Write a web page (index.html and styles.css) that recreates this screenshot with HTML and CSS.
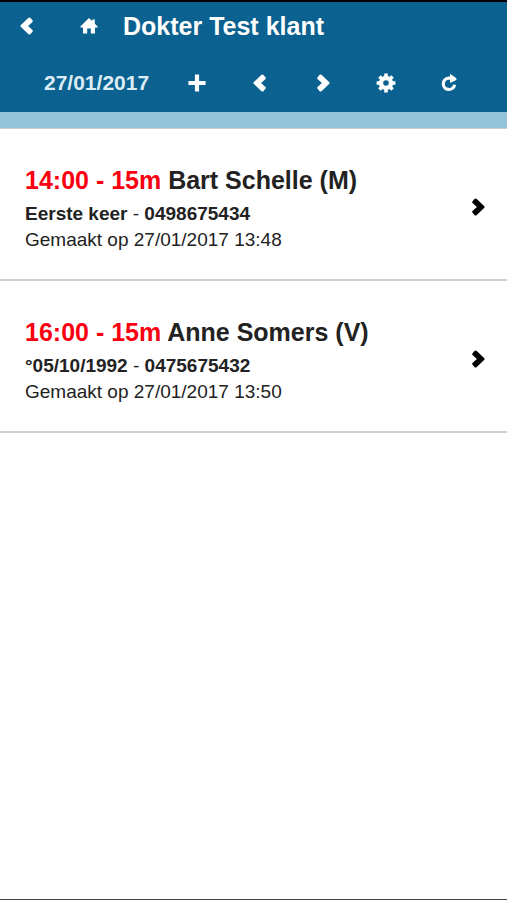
FILE: index.html
```html
<!DOCTYPE html>
<html lang="nl">
<head>
<meta charset="utf-8">
<meta name="viewport" content="width=device-width, initial-scale=1">
<title>Dokter Test klant</title>
<link rel="stylesheet" href="styles.css">
</head>
<body>
<svg class="symbols" aria-hidden="true">
  <symbol id="chevron" viewBox="0 0 20 20"><path d="M4.4 4.5 6.4 2.1Q7.6.9 8.8 2.1L16.3 9.3Q17 10 16.3 10.7L8.8 17.9Q7.6 19.1 6.4 17.9L4.4 15.5Q3.8 14.6 4.5 13.9L8.9 10 4.5 6.1Q3.8 5.4 4.4 4.5Z" fill="currentColor"/></symbol>
  <symbol id="home" viewBox="0 0 20 20"><path d="M10 2 18.6 10.6V11.6H16V17.4H11.8V12.4H8.2V17.4H4V11.6H1.4V10.6ZM13.2 3.4h2.6v5l-2.6-2Z" fill="currentColor"/></symbol>
  <symbol id="plus" viewBox="0 0 20 20"><path d="M10 1.4v17.2M1.4 10h17.2" stroke="currentColor" stroke-width="4.2"/></symbol>
  <symbol id="gear" viewBox="0 0 20 20"><g fill="none" stroke="currentColor"><circle cx="10" cy="10" r="5" stroke-width="4.4"/><path d="M10 .6v4M10 15.4v4M.6 10h4M15.4 10h4M3.4 3.4l2.8 2.8M13.8 13.8l2.8 2.8M16.6 3.4l-2.8 2.8M6.2 13.8l-2.8 2.8" stroke-width="3.6"/></g></symbol>
  <symbol id="refresh" viewBox="0 0 20 20"><path d="M12 5.1H9.6A5.7 5.7 0 1 0 15.6 11.8" fill="none" stroke="currentColor" stroke-width="3.2"/><path d="M11 .8 17.4 5.2V7L11 10Z" fill="currentColor"/></symbol>
</svg>
<header class="header">
  <div class="bar">
    <button class="tool back" type="button" aria-label="Terug"><svg class="icon flip"><use href="#chevron"/></svg></button>
    <a class="tool home" href="#" aria-label="Start"><svg class="icon"><use href="#home"/></svg></a>
    <h1 class="title">Dokter Test klant</h1>
  </div>
  <div class="bar bar-date">
    <time class="date" datetime="2017-01-27">27/01/2017</time>
    <button class="tool" type="button" aria-label="Toevoegen"><svg class="icon"><use href="#plus"/></svg></button>
    <button class="tool" type="button" aria-label="Vorige dag"><svg class="icon flip"><use href="#chevron"/></svg></button>
    <button class="tool" type="button" aria-label="Volgende dag"><svg class="icon"><use href="#chevron"/></svg></button>
    <button class="tool" type="button" aria-label="Instellingen"><svg class="icon"><use href="#gear"/></svg></button>
    <button class="tool" type="button" aria-label="Vernieuwen"><svg class="icon"><use href="#refresh"/></svg></button>
  </div>
</header>
<main>
  <ul class="list">
    <li>
      <a class="item" href="#">
        <div class="info">
          <h2 class="name"><span class="time">14:00 - 15m</span> Bart Schelle (M)</h2>
          <p class="line"><b>Eerste keer</b> - <b>0498675434</b></p>
          <p class="line">Gemaakt op 27/01/2017 13:48</p>
        </div>
        <svg class="icon arrow" aria-hidden="true"><use href="#chevron"/></svg>
      </a>
    </li>
    <li>
      <a class="item" href="#">
        <div class="info">
          <h2 class="name"><span class="time">16:00 - 15m</span> Anne Somers (V)</h2>
          <p class="line"><b>°05/10/1992</b> - <b>0475675432</b></p>
          <p class="line">Gemaakt op 27/01/2017 13:50</p>
        </div>
        <svg class="icon arrow" aria-hidden="true"><use href="#chevron"/></svg>
      </a>
    </li>
  </ul>
</main>
</body>
</html>
```

FILE: styles.css
```css
* {
  box-sizing: border-box;
}

body {
  margin: 0;
  min-height: 100vh;
  border-top: 2px solid #000;
  border-bottom: 1px solid #444;
  background: #fff;
  color: #222;
  font-family: "Liberation Sans", Arial, sans-serif;
  font-size: 19px;
  line-height: 26px;
}

.symbols {
  display: none;
}

.header {
  background: #0b618f;
  color: #fff;
  border-bottom: 16px solid #93c4d9;
}

.bar {
  display: flex;
  align-items: center;
  height: 48px;
}

.bar-date {
  height: 62px;
  padding-left: 44px;
  padding-top: 4px;
}

.tool {
  display: flex;
  align-items: center;
  justify-content: center;
  width: 63px;
  height: 44px;
  padding: 0;
  border: 0;
  background: none;
  color: inherit;
}

.back {
  width: 54px;
}

.home {
  width: 69px;
}

.icon {
  display: block;
  flex: none;
  width: 20px;
  height: 20px;
}

.flip {
  transform: scaleX(-1);
}

.title {
  margin: 0;
  font-size: 25px;
  line-height: 30px;
}

.date {
  width: 121px;
  color: #dcecf7;
  font-size: 21px;
  font-weight: bold;
}

.list {
  margin: 0;
  padding: 0;
  list-style: none;
  border-top: 1px solid #ccc;
}

.item {
  display: flex;
  align-items: center;
  justify-content: space-between;
  padding: 32px 19px 26px 25px;
  border-bottom: 2px solid #d0d0d0;
  color: inherit;
  text-decoration: none;
}

.name {
  margin: 0 0 2px;
  font-size: 25px;
  line-height: 38px;
}

.time {
  color: #fa0010;
}

.line {
  margin: 0;
}

.arrow {
  color: #000;
}
```
